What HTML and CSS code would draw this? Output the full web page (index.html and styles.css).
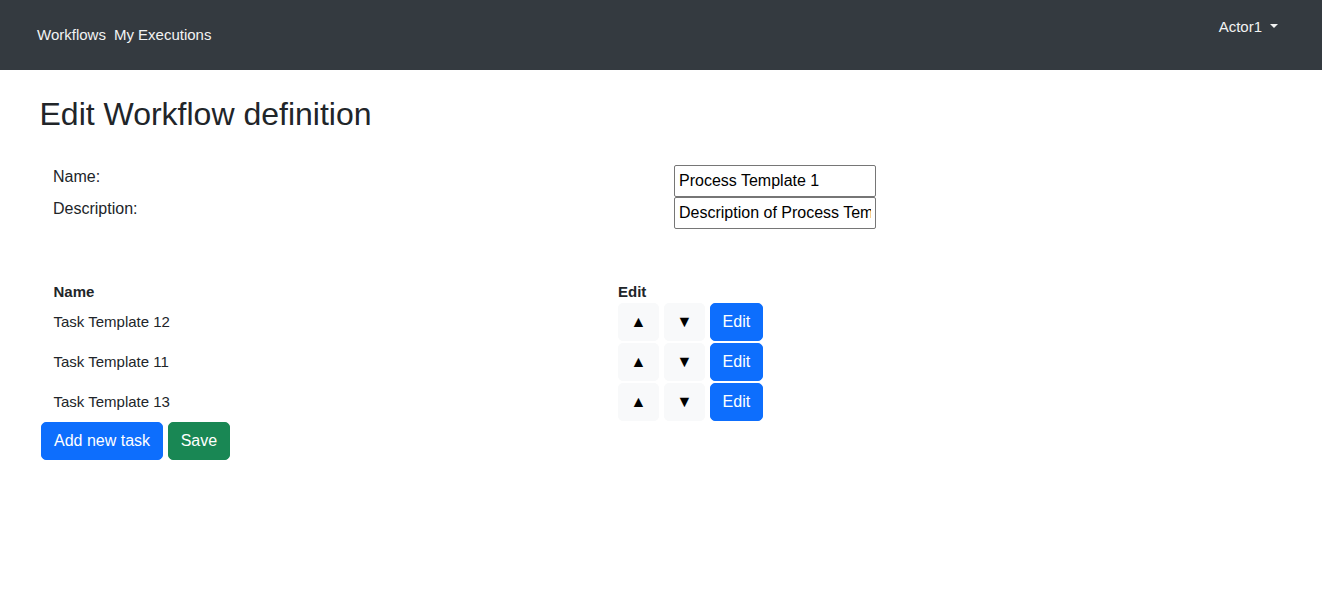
FILE: index.html
```html
<!DOCTYPE html>
<html lang="en">
<head>
<meta charset="utf-8">
<title>Edit Workflow definition</title>
<link rel="stylesheet" href="styles.css">
</head>
<body>
<nav class="navbar">
  <div class="nav-links">
    <a class="nav-link" href="#">Workflows</a>
    <a class="nav-link" href="#">My Executions</a>
  </div>
  <div class="nav-user">
    <a class="nav-link dropdown-toggle" href="#">Actor1</a>
  </div>
</nav>
<main class="main">
  <h2 class="title">Edit Workflow definition</h2>
  <div class="form-grid">
    <label class="form-label">Name:</label>
    <input class="form-input" type="text" value="Process Template 1">
    <label class="form-label">Description:</label>
    <input class="form-input" type="text" value="Description of Process Template 1">
  </div>
  <div class="task-table">
    <div class="th">Name</div>
    <div class="th">Edit</div>
    <div class="td">Task Template 12</div>
    <div class="td actions"><button class="btn btn-light">▲</button><button class="btn btn-light">▼</button><button class="btn btn-primary">Edit</button></div>
    <div class="td">Task Template 11</div>
    <div class="td actions"><button class="btn btn-light">▲</button><button class="btn btn-light">▼</button><button class="btn btn-primary">Edit</button></div>
    <div class="td">Task Template 13</div>
    <div class="td actions"><button class="btn btn-light">▲</button><button class="btn btn-light">▼</button><button class="btn btn-primary">Edit</button></div>
  </div>
  <div class="footer-actions">
    <button class="btn btn-primary">Add new task</button>
    <button class="btn btn-success">Save</button>
  </div>
</main>
</body>
</html>
```

FILE: styles.css
```css
* { box-sizing: border-box; }
html, body { margin: 0; padding: 0; }
body {
  font-family: "Liberation Sans", Arial, sans-serif;
  font-size: 16px;
  line-height: 1.5;
  color: #212529;
  background: #fff;
}
.navbar {
  height: 70px;
  background: #343a40;
  display: flex;
  justify-content: space-between;
  align-items: flex-start;
  padding: 0 37px;
}
.nav-links {
  display: flex;
  gap: 8px;
  padding-top: 24px;
}
.nav-link {
  color: #f2f3f3;
  text-decoration: none;
  font-size: 15px;
  line-height: 22.5px;
}
.nav-user {
  padding-top: 15px;
  padding-right: 7px;
}
.dropdown-toggle::after {
  content: "";
  display: inline-block;
  margin-left: 8px;
  vertical-align: 4px;
  border-top: 4.5px solid #f2f3f3;
  border-left: 4.5px solid transparent;
  border-right: 4.5px solid transparent;
  border-bottom: 0;
}
.main {
  padding: 25px 38px 0 38px;
}
.title {
  margin: 0;
  font-size: 32px;
  font-weight: 400;
  line-height: 1.2;
  padding-left: 1.5px;
}
.form-grid {
  display: grid;
  grid-template-columns: 636px 202px;
  grid-auto-rows: 32px;
  margin-top: 31.6px;
}
.form-label {
  padding-left: 15px;
  line-height: 24px;
}
.form-input {
  width: 202px;
  height: 32px;
  border: 1px solid #767676;
  border-radius: 2px;
  padding: 0 4px;
  font-family: "Liberation Sans", Arial, sans-serif;
  font-size: 16px;
  color: #000;
  background: #fff;
}
.task-table {
  display: grid;
  grid-template-columns: 580px auto;
  grid-template-rows: 19px repeat(3, 40px);
  margin-top: 54px;
  font-size: 15px;
}
.th {
  font-weight: 700;
  line-height: 17px;
}
.th:first-child, .td:nth-child(odd) { padding-left: 15.5px; }
.td {
  display: flex;
  align-items: center;
}
.actions { gap: 5px; }
.btn {
  display: inline-flex;
  align-items: center;
  justify-content: center;
  height: 38px;
  padding: 0 12px;
  border: 1px solid transparent;
  border-radius: 5px;
  font-family: "Liberation Sans", Arial, sans-serif;
  font-size: 16px;
  line-height: 24px;
  cursor: pointer;
}
.btn-light {
  width: 41px;
  padding: 0;
  background: #f8f9fa;
  border-color: #f8f9fa;
  color: #000;
  font-size: 16px;
}
.btn-primary {
  background: #0d6efd;
  border-color: #0d6efd;
  color: #fff;
}
.actions .btn-primary { padding: 0 11.6px; }
.btn-success {
  background: #198754;
  border-color: #198754;
  color: #fff;
  padding: 0 11.6px;
}
.footer-actions {
  display: flex;
  gap: 5px;
  padding-left: 3px;
}
```
